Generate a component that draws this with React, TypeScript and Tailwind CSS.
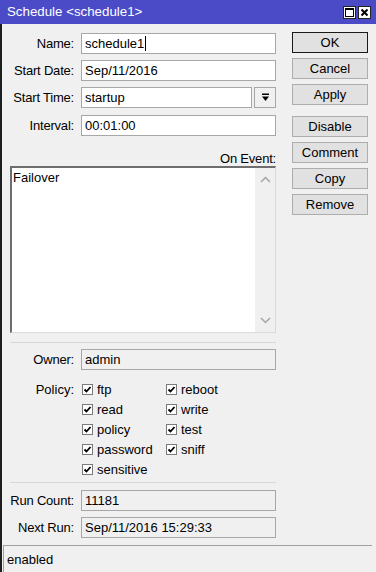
import React from "react";

const field =
  "h-[21px] flex-1 border border-[#a7a7a7] flex items-center pl-[3px] whitespace-nowrap overflow-hidden";

function Row({ label, children, className = "" }: { label: string; children: React.ReactNode; className?: string }) {
  return (
    <div className={`flex items-center ${className}`}>
      <div className="w-[64px] text-right whitespace-nowrap tracking-[-0.2px]">{label}</div>
      <div className="ml-[7px] flex flex-1 items-center">{children}</div>
    </div>
  );
}

function Btn({ label, isDefault = false }: { label: string; isDefault?: boolean }) {
  return (
    <div
      className={`h-[21px] w-[76px] flex items-center justify-center bg-[#e1e1e1] border ${
        isDefault ? "border-[#1a1a1a]" : "border-[#adadad]"
      }`}
    >
      {label}
    </div>
  );
}

function Check({ label }: { label: string }) {
  return (
    <div className="flex items-center h-[20px]">
      <div className="w-[11px] h-[11px] border border-[#7a7a7a] bg-white flex items-center justify-center">
        <svg width="9" height="9" viewBox="0 0 9 9">
          <path d="M1.5 4.5 L3.5 6.5 L7.5 2" fill="none" stroke="#000" strokeWidth="1.8" />
        </svg>
      </div>
      <span className="ml-[4px]">{label}</span>
    </div>
  );
}

export default function App() {
  return (
    <div
      className="w-[376px] h-[572px] bg-[#f0f0f0] overflow-hidden flex flex-col text-[13px] text-black leading-none"
      style={{ fontFamily: '"Liberation Sans", Arial, sans-serif' }}
    >
      {/* Title bar */}
      <div className="h-[24px] bg-[#4b4bc8] flex items-center pl-[7px] pr-[5px] text-white">
        <span className="flex-1 text-[13.3px]">Schedule &lt;schedule1&gt;</span>
        <div className="flex gap-[2px]">
          <div className="w-[13px] h-[13px] bg-white border border-[#222] flex items-center justify-center">
            <div className="w-[9px] h-[9px] border border-black border-t-2" />
          </div>
          <div className="w-[13px] h-[13px] bg-white border border-[#222] flex items-center justify-center">
            <svg width="9" height="9" viewBox="0 0 9 9">
              <path d="M1.5 1.5 L7.5 7.5 M7.5 1.5 L1.5 7.5" stroke="#000" strokeWidth="2" />
            </svg>
          </div>
        </div>
      </div>

      {/* Body */}
      <div className="flex-1 flex flex-col border-l-2 border-[#1e1e1e]">
        <div className="flex flex-1">
          {/* Form column */}
          <div className="w-[274px] pl-[8px] pt-[9px] flex flex-col">
            <Row label="Name:">
              <div className={`${field} bg-white`}>
                schedule1<span className="inline-block w-px h-[15px] bg-black ml-[1px]" />
              </div>
            </Row>
            <Row label="Start Date:" className="mt-[6px]">
              <div className={`${field} bg-white`}>Sep/11/2016</div>
            </Row>
            <Row label="Start Time:" className="mt-[6px]">
              <div className={`${field} bg-white`}>startup</div>
              <div className="ml-[2px] w-[22px] h-[21px] border border-[#a7a7a7] bg-[#f0f0f0] flex items-center justify-center">
                <svg width="9" height="9" viewBox="0 0 9 9">
                  <rect x="1" y="0.5" width="7" height="1.5" fill="#000" />
                  <path d="M1 3.5 H8 L4.5 8 Z" fill="#000" />
                </svg>
              </div>
            </Row>
            <Row label="Interval:" className="mt-[7px]">
              <div className={`${field} bg-white`}>00:01:00</div>
            </Row>

            <div className="mt-[16px] text-right tracking-[-0.2px]">On Event:</div>
            <div className="mt-[1px] h-[167px] bg-white border border-[#dadada] border-t-2 border-l-2 border-t-[#6e6e6e] border-l-[#6e6e6e] flex">
              <div className="flex-1 pl-[1px] pt-[3px]">Failover</div>
              <div className="w-[20px] bg-[#f0f0f0] flex flex-col items-center justify-between pt-[8px] pb-[8px]">
                <svg width="11" height="7" viewBox="0 0 11 7">
                  <path d="M1 6 L5.5 1.5 L10 6" fill="none" stroke="#a6a6a6" strokeWidth="1.5" />
                </svg>
                <svg width="11" height="7" viewBox="0 0 11 7">
                  <path d="M1 1 L5.5 5.5 L10 1" fill="none" stroke="#a6a6a6" strokeWidth="1.5" />
                </svg>
              </div>
            </div>

            <div className="mt-[9px] h-px bg-[#d7d7d7]" />

            <Row label="Owner:" className="mt-[6px]">
              <div className={field}>admin</div>
            </Row>

            <div className="flex mt-[9px]">
              <div className="w-[64px] text-right h-[20px] flex items-center justify-end">Policy:</div>
              <div className="ml-[8px] grid grid-cols-[84px_auto]">
                <Check label="ftp" />
                <Check label="reboot" />
                <Check label="read" />
                <Check label="write" />
                <Check label="policy" />
                <Check label="test" />
                <Check label="password" />
                <Check label="sniff" />
                <Check label="sensitive" />
              </div>
            </div>

            <div className="mt-[3px] h-px bg-[#d7d7d7]" />

            <Row label="Run Count:" className="mt-[7px]">
              <div className={field}>11181</div>
            </Row>
            <Row label="Next Run:" className="mt-[6px]">
              <div className={field}>Sep/11/2016 15:29:33</div>
            </Row>
          </div>

          {/* Buttons */}
          <div className="ml-[16px] pt-[8px] flex flex-col gap-[5px]">
            <Btn label="OK" isDefault />
            <Btn label="Cancel" />
            <Btn label="Apply" />
            <div className="h-px shrink-0" />
            <Btn label="Disable" />
            <Btn label="Comment" />
            <Btn label="Copy" />
            <Btn label="Remove" />
          </div>
        </div>

        {/* Status bar */}
        <div className="ml-[1px] mr-[4px] h-[27px] border-t border-l border-[#a0a0a0] flex items-center pl-[3px]">
          enabled
        </div>
      </div>
    </div>
  );
}
